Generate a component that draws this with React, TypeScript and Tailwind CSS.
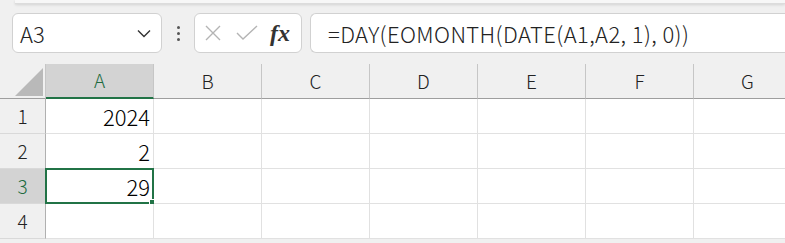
import React from "react";

const cols = ["A", "B", "C", "D", "E", "F", "G"];
const rows: Record<number, string> = { 1: "2024", 2: "2", 3: "29" };

const font = { fontFamily: '"Noto Sans CJK JP", "Noto Sans", sans-serif' };

export default function App() {
  return (
    <div className="w-[785px] h-[243px] overflow-hidden bg-[#f0f0f0] font-light" style={font}>
      {/* ribbon edge */}
      <div className="ml-[15px] h-[4px] bg-[#f7f7f7] border-b border-[#dcdcdc] shadow-[0_1px_3px_rgba(0,0,0,0.12)]" />

      {/* formula bar */}
      <div className="flex items-center h-[40px] mt-[9px] pl-[12px]">
        <div className="flex items-center justify-between w-[150px] h-full bg-white border border-[#d1d1d1] rounded-[6px] pl-[7px] pr-[10px]">
          <span className="text-[22px] leading-none text-[#222]">A3</span>
          <svg width="14" height="9" viewBox="0 0 14 9" fill="none">
            <path d="M1 1.5 L7 7.5 L13 1.5" stroke="#333" strokeWidth="1.4" />
          </svg>
        </div>
        <div className="flex flex-col gap-[3px] w-[32px] items-center">
          <span className="w-[3px] h-[3px] bg-[#555] rounded-full" />
          <span className="w-[3px] h-[3px] bg-[#555] rounded-full" />
          <span className="w-[3px] h-[3px] bg-[#555] rounded-full" />
        </div>
        <div className="flex items-center w-[108px] h-full bg-white border border-[#d1d1d1] rounded-[6px] pl-[9px]">
          <svg width="18" height="18" viewBox="0 0 18 18" fill="none">
            <path d="M2 2 L16 16 M16 2 L2 16" stroke="#b4b4b4" strokeWidth="1.4" />
          </svg>
          <svg width="22" height="18" viewBox="0 0 22 18" fill="none" className="ml-[14px]">
            <path d="M1 9 L7 15 L21 2" stroke="#b4b4b4" strokeWidth="1.4" />
          </svg>
          <span
            className="ml-[12px] text-[24px] italic font-bold text-[#333] leading-none"
            style={{ fontFamily: '"Liberation Serif", serif' }}
          >
            fx
          </span>
        </div>
        <div className="flex items-center flex-1 h-full ml-[8px] bg-white border border-r-0 border-[#d1d1d1] rounded-l-[6px] pl-[17px]">
          <span className="text-[22px] leading-none text-[#222] tracking-[0.4px]">=DAY(EOMONTH(DATE(A1,A2, 1), 0))</span>
        </div>
      </div>

      {/* grid */}
      <div className="grid grid-cols-[46px_repeat(7,108px)] grid-rows-[35px_repeat(4,35px)] mt-[11px]">
        <div className="relative border-r border-[#c6c6c6] border-b border-b-[#9e9e9e]">
          <svg width="28" height="28" viewBox="0 0 28 28" className="absolute left-[15px] top-[4px]">
            <path d="M28 0 L28 28 L0 28 Z" fill="#b9b9b9" />
          </svg>
        </div>
        {cols.map((c) => (
          <div
            key={c}
            className={
              c === "A"
                ? "flex items-center justify-center bg-[#d3d3d3] text-[#1d6b3f] text-[19px] border-r border-[#c6c6c6] border-b-2 border-b-[#217346]"
                : "flex items-center justify-center text-[19px] text-[#222] border-r border-[#c6c6c6] border-b border-b-[#9e9e9e]"
            }
          >
            {c}
          </div>
        ))}

        {[1, 2, 3, 4].map((r) => (
          <React.Fragment key={r}>
            <div
              className={
                r === 3
                  ? "flex items-center justify-center bg-[#d3d3d3] text-[#1d6b3f] text-[19px] border-r border-[#b0b0b0] border-b border-b-[#d9d9d9]"
                  : "flex items-center justify-center text-[19px] text-[#222] border-r border-[#b0b0b0] border-b border-b-[#d9d9d9]"
              }
            >
              {r}
            </div>
            {cols.map((c) => (
              <div
                key={c}
                className="relative flex items-center justify-end pr-[3px] bg-white border-r border-b border-[#e1e1e1] text-[22px] text-black"
              >
                {c === "A" ? rows[r] : null}
                {c === "A" && r === 3 && (
                  <>
                    <div className="absolute -left-[1px] -top-[1px] -right-[1px] -bottom-[1px] border-2 border-[#217346]" />
                    <div className="absolute -right-[4px] -bottom-[4px] w-[8px] h-[8px] bg-[#217346] border border-white" />
                  </>
                )}
              </div>
            ))}
          </React.Fragment>
        ))}
      </div>
    </div>
  );
}
